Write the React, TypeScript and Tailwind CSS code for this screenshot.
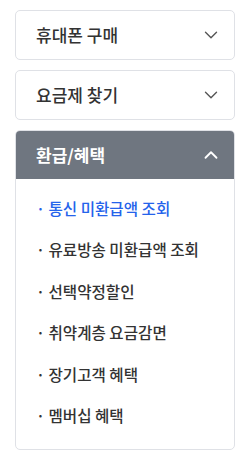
import { ChevronDown, ChevronUp } from "lucide-react";

const items = [
  { label: "통신 미환급액 조회", active: true },
  { label: "유료방송 미환급액 조회" },
  { label: "선택약정할인" },
  { label: "취약계층 요금감면" },
  { label: "장기고객 혜택" },
  { label: "멤버십 혜택" },
];

export default function App() {
  return (
    <div
      className="w-[250px] h-[459px] bg-white px-[15px] pt-[10px] flex flex-col gap-[10px]"
      style={{ fontFamily: '"Noto Sans CJK KR", "Noto Sans", sans-serif' }}
    >
      <button className="h-[50px] w-full flex items-center justify-between pl-[20px] pr-[12px] border border-[#dfe1e6] rounded-[5px] bg-white">
        <span className="text-[17px] font-medium text-[#333]">휴대폰 구매</span>
        <ChevronDown size={22} strokeWidth={1.5} className="text-[#555]" />
      </button>

      <button className="h-[50px] w-full flex items-center justify-between pl-[20px] pr-[12px] border border-[#dfe1e6] rounded-[5px] bg-white">
        <span className="text-[17px] font-medium text-[#333]">요금제 찾기</span>
        <ChevronDown size={22} strokeWidth={1.5} className="text-[#555]" />
      </button>

      <div className="w-full border border-[#dfe1e6] rounded-[5px] overflow-hidden">
        <div className="h-[48px] flex items-center justify-between pl-[20px] pr-[12px] bg-[#6f7680]">
          <span className="text-[17px] font-bold text-white">환급/혜택</span>
          <ChevronUp size={22} strokeWidth={2} className="text-white" />
        </div>
        <ul className="pt-[9px] pb-[13px]">
          {items.map((it) => (
            <li
              key={it.label}
              className={`h-[41.4px] flex items-center pl-[20px] text-[15.6px] font-medium ${
                it.active ? "text-[#2563eb]" : "text-[#333]"
              }`}
            >
              · {it.label}
            </li>
          ))}
        </ul>
      </div>
    </div>
  );
}
